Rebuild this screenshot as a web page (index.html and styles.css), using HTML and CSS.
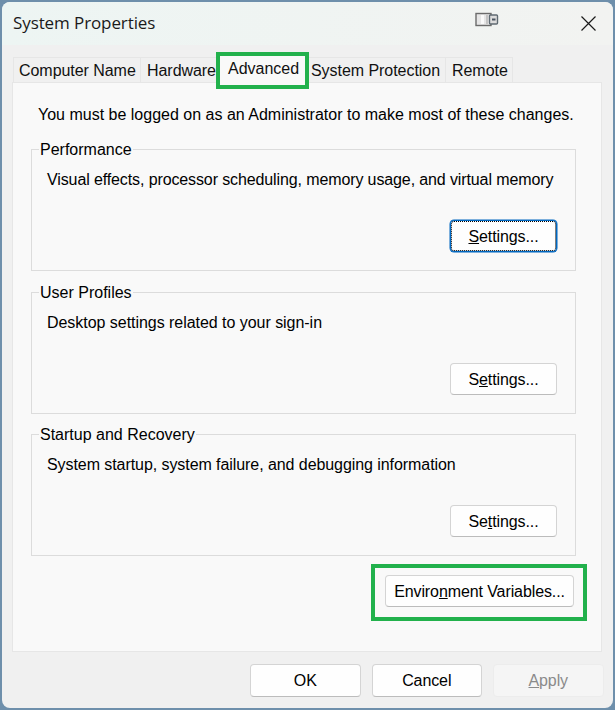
FILE: index.html
```html
<!DOCTYPE html>
<html lang="en">
<head>
<meta charset="utf-8">
<title>System Properties</title>
<link rel="stylesheet" href="styles.css">
</head>
<body>
<div class="window">
  <header class="titlebar">
    <span class="title">System Properties</span>
    <svg class="app-icon" width="24" height="16" viewBox="0 0 24 16" aria-hidden="true">
      <rect x="1" y="1.5" width="15" height="12" fill="#e6e6e6" stroke="#6b6b6b" stroke-width="1.4"/>
      <rect x="6" y="3" width="3" height="9" fill="#fafafa"/>
      <rect x="11" y="3" width="2" height="9" fill="#c4c4c4"/>
      <rect x="14.5" y="3" width="8" height="9" rx="1" fill="#dcdcdc" stroke="#5f6a72" stroke-width="1.4"/>
      <rect x="17" y="6.5" width="3.5" height="2" fill="#4a5560"/>
    </svg>
    <svg class="close" width="15" height="15" viewBox="0 0 15 15" aria-hidden="true">
      <path d="M0.5 0.5 L14.5 14.5 M14.5 0.5 L0.5 14.5" stroke="#1a1a1a" stroke-width="1.2" fill="none"/>
    </svg>
  </header>

  <nav class="tabs">
    <div class="tab tab-computer">Computer Name</div>
    <div class="tab tab-hardware">Hardware</div>
    <div class="tab tab-advanced">Advanced</div>
    <div class="tab tab-protection">System Protection</div>
    <div class="tab tab-remote">Remote</div>
  </nav>

  <main class="panel">
    <p class="notice">You must be logged on as an Administrator to make most of these changes.</p>

    <fieldset class="group group-first">
      <legend>Performance</legend>
      <p class="desc desc-long">Visual effects, processor scheduling, memory usage, and virtual memory</p>
      <div class="group-actions"><button class="btn btn-settings btn-focus"><u>S</u>ettings...</button></div>
    </fieldset>

    <fieldset class="group">
      <legend>User Profiles</legend>
      <p class="desc desc-short">Desktop settings related to your sign-in</p>
      <div class="group-actions"><button class="btn btn-settings">S<u>e</u>ttings...</button></div>
    </fieldset>

    <fieldset class="group group-last">
      <legend>Startup and Recovery</legend>
      <p class="desc">System startup, system failure, and debugging information</p>
      <div class="group-actions"><button class="btn btn-settings">Se<u>t</u>tings...</button></div>
    </fieldset>

    <div class="env-row"><div class="env-highlight"><button class="btn btn-env">Enviro<u>n</u>ment Variables...</button></div></div>
  </main>

  <footer class="footer">
    <button class="btn btn-footer">OK</button>
    <button class="btn btn-footer">Cancel</button>
    <button class="btn btn-footer btn-disabled" disabled><u>A</u>pply</button>
  </footer>
</div>
</body>
</html>
```

FILE: styles.css
```css
* { box-sizing: border-box; }
html, body { margin: 0; height: 100%; }
body {
  background: #6e8fab;
  font-family: "Liberation Sans", Arial, sans-serif;
  font-size: 16px;
  color: #000;
  overflow: hidden;
  padding: 2px;
}
.window {
  width: 611px;
  height: 706px;
  background: #f0f0f0;
  border-radius: 8px;
  overflow: hidden;
  display: flex;
  flex-direction: column;
}
.titlebar {
  height: 43px;
  flex: none;
  background: linear-gradient(90deg, #edf5f3, #f2f3f1);
  display: flex;
  align-items: center;
  padding: 0 17px 0 11px;
}
.title {
  font-family: "Open Sans", sans-serif;
  font-size: 17px;
  line-height: 22px;
  margin-top: -2px;
  letter-spacing: -0.1px;
  color: #1a1a1a;
  flex: 1;
}
.app-icon { margin: -7px 82px 0 0; }
.close { margin-top: 0; }

.tabs {
  display: flex;
  align-items: flex-end;
  height: 37px;
  flex: none;
  padding-left: 11px;
}
.tab {
  height: 25px;
  line-height: 25px;
  background: #f0f0f0;
  border: 1px solid #e6e6e6;
  border-bottom: 0;
  white-space: nowrap;
  margin-left: -1px;
  color: #111;
  letter-spacing: -0.05px;
}
.tab-computer { width: 128px; padding-left: 5px; margin-left: 0; }
.tab-hardware { width: 78px; padding-left: 6px; }
.tab-advanced {
  width: 85px;
  height: 29px;
  line-height: 26px;
  padding-left: 8px;
  background: #f9f9f9;
  position: relative;
  border: 0;
  margin: 0 0 -3px 2px;
  outline: 4px solid #22b14c;
  z-index: 1;
  letter-spacing: 0;
}
.tab-protection { width: 141px; padding-left: 5px; margin-left: 0; }
.tab-remote { width: 68px; padding-left: 6px; }

.panel {
  width: 590px;
  height: 570px;
  flex: none;
  margin-left: 10px;
  background: #f9f9f9;
  border: 1px solid #e6e6e6;
  padding: 22px 25px 0 18px;
}
.notice {
  margin: 0 0 14px 7px;
  line-height: 20px;
  white-space: nowrap;
}
.group {
  margin: 0 0 10px;
  padding: 0 18px 18px 15px;
  border: 1px solid #dcdcdc;
  min-width: 0;
}
.group-first { margin-bottom: 11px; }
.group-last { margin-bottom: 0; }
.group legend {
  padding: 0 1px;
  margin-left: -8px;
  line-height: 20px;
  font-size: 16px;
  transform: translateY(1px);
}
.desc {
  margin: 11px 0 0;
  line-height: 20px;
  white-space: nowrap;
  letter-spacing: -0.07px;
}
.desc-long { letter-spacing: -0.115px; }
.desc-short { letter-spacing: -0.04px; }
.group-actions {
  display: flex;
  justify-content: flex-end;
  margin-top: 30px;
}

.btn {
  font: inherit;
  letter-spacing: -0.1px;
  color: #000;
  background: #fefefe;
  border: 1px solid #d4d4d4;
  border-bottom-color: #bcbcbc;
  border-radius: 4px;
  padding: 0;
  text-align: center;
}
.btn-settings { width: 107px; height: 32px; padding-top: 2px; }
.btn-focus {
  border: 1px solid #0067c0;
  box-shadow: 0 0 0 0.5px #0067c0;
  outline: 1px dotted #000;
  outline-offset: -2px;
}
.env-row {
  display: flex;
  justify-content: flex-end;
  margin-top: 19px;
  padding-right: 2px;
}
.env-highlight {
  position: relative;
  display: flex;
}
.env-highlight::after {
  content: "";
  position: absolute;
  inset: -11px -13px -14px -14px;
  border: 4px solid #22b14c;
  pointer-events: none;
}
.btn-env {
  width: 189px;
  height: 32px;
  padding-top: 1px;
}
.footer {
  flex: 1;
  display: flex;
  justify-content: flex-end;
  gap: 11px;
  padding: 12px 9.5px 0 0;
}
.btn-footer { width: 110.5px; height: 33px; }
.btn-disabled {
  background: #f5f5f5;
  border-color: #ececec;
  color: #8a8a8a;
}
```
